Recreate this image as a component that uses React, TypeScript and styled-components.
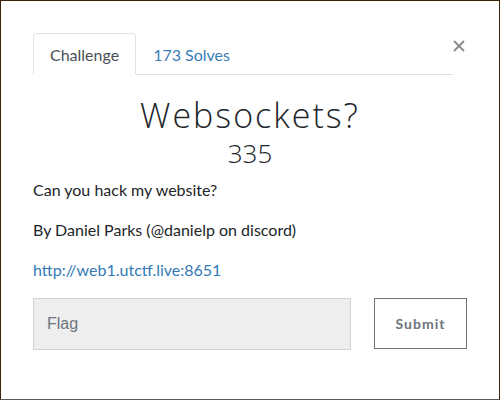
import React from "react";
import styled, { createGlobalStyle } from "styled-components";

const Global = createGlobalStyle`
  html, body { margin: 0; padding: 0; background: #fff; }
  * { box-sizing: border-box; }
`;

const Frame = styled.div`
  width: 500px;
  height: 400px;
  background: #fff;
  border-top: 1px solid #3f2206;
  border-right: 1px solid #3f2206;
  border-bottom: 1px solid #5b5b5b;
  border-left: 1px solid #3f2206;
  position: relative;
  font-family: Lato, "Open Sans", sans-serif;
  color: #212529;
  padding: 32px 32px 0 32px;
  overflow: hidden;
`;

const LeftShade = styled.div`
  position: absolute;
  left: -1px;
  top: 130px;
  bottom: 0;
  width: 1px;
  background: #5b5b5b;
`;

const Header = styled.div`
  display: flex;
  align-items: flex-start;
`;

const Tabs = styled.div`
  display: flex;
  flex: none;
  width: 420px;
  border-bottom: 1px solid #dee2e6;
`;

const Tab = styled.div<{ $active?: boolean }>`
  height: 42px;
  padding: 0 16px;
  display: flex;
  align-items: center;
  font-size: 16px;
  margin-bottom: -1px;
  border: 1px solid ${(p) => (p.$active ? "#dee2e6" : "transparent")};
  border-bottom-color: ${(p) => (p.$active ? "#fff" : "transparent")};
  border-radius: 4px 4px 0 0;
  background: ${(p) => (p.$active ? "#fff" : "transparent")};
  color: ${(p) => (p.$active ? "#495057" : "#3a7cb6")};
`;

const Close = styled.div`
  flex: none;
  margin-left: auto;
  margin-top: 7px;
  margin-right: 2px;
  width: 12px;
  height: 12px;
  display: flex;
`;

const Title = styled.h1`
  margin: 20px 0 0 0;
  text-align: center;
  font-family: "Open Sans", Lato, sans-serif;
  font-weight: 300;
  font-size: 34px;
  line-height: 40px;
  letter-spacing: 2px;
  color: #212529;
`;

const Points = styled.div`
  text-align: center;
  font-family: "Open Sans", Lato, sans-serif;
  font-size: 26px;
  line-height: 30px;
  font-weight: 300;
  margin-top: 3px;
`;

const Para = styled.p`
  margin: 0;
  font-size: 16px;
  line-height: 20px;
  margin-top: 20px;
  &:first-of-type { margin-top: 12px; }
`;

const Link = styled.a`
  color: #337ab7;
  text-decoration: none;
`;

const FormRow = styled.div`
  display: flex;
  gap: 23px;
  margin-top: 18px;
`;

const Input = styled.div`
  width: 318px;
  height: 52px;
  background: #eeeeee;
  border: 1px solid #ccd4db;
  display: flex;
  align-items: center;
  padding-left: 13px;
  font-family: "Liberation Sans", Arial, sans-serif;
  font-size: 16px;
  color: #6c757d;
`;

const Button = styled.div`
  width: 93px;
  height: 51px;
  border: 1px solid #6c757d;
  display: flex;
  align-items: center;
  justify-content: center;
  font-weight: 700;
  font-size: 14px;
  letter-spacing: 1px;
  color: #6c757d;
`;

export default function App() {
  return (
    <>
      <Global />
      <Frame>
        <LeftShade />
        <Header>
          <Tabs>
            <Tab $active>Challenge</Tab>
            <Tab>173 Solves</Tab>
          </Tabs>
          <Close>
            <svg width="12" height="12" viewBox="0 0 12 12">
              <path d="M1 1L11 11M11 1L1 11" stroke="#8a8a8a" strokeWidth="1.8" />
            </svg>
          </Close>
        </Header>
        <Title>Websockets?</Title>
        <Points>335</Points>
        <Para>Can you hack my website?</Para>
        <Para>By Daniel Parks (@danielp on discord)</Para>
        <Para>
          <Link href="#">http://web1.utctf.live:8651</Link>
        </Para>
        <FormRow>
          <Input>Flag</Input>
          <Button>Submit</Button>
        </FormRow>
      </Frame>
    </>
  );
}
